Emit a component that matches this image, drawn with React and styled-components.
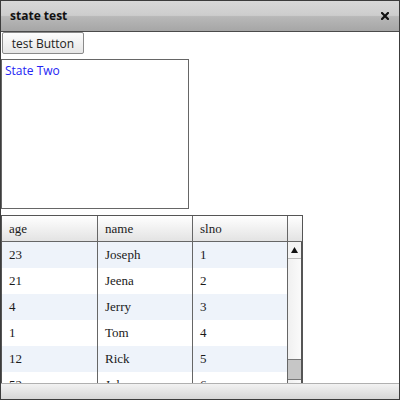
import React from "react";
import styled, { createGlobalStyle } from "styled-components";

const Global = createGlobalStyle`
  html, body { margin: 0; padding: 0; width: 400px; height: 400px; overflow: hidden; background: #fff; }
  * { box-sizing: border-box; }
`;

const Window = styled.div`
  width: 400px;
  height: 400px;
  border: 1px solid #3c3c3c;
  display: flex;
  flex-direction: column;
  background: #fff;
  font-family: "Open Sans", "Noto Sans", sans-serif;
`;

const TitleBar = styled.div`
  height: 31px;
  flex: none;
  display: flex;
  align-items: center;
  justify-content: space-between;
  padding: 0 10px 1px 9px;
  border-bottom: 1px solid #4a4a4a;
  background: linear-gradient(#d8d8d8 0%, #cdcdcd 48%, #b8b8b8 52%, #a6a6a6 100%);
  font-weight: bold;
  font-size: 12px;
  color: #111;
`;

const CloseIcon = styled.svg`
  width: 8px;
  height: 8px;
  display: block;
`;

const Content = styled.div`
  flex: 1;
  overflow: hidden;
  display: flex;
  flex-direction: column;
  align-items: flex-start;
`;

const Button = styled.button`
  flex: none;
  margin: 0 0 0 1px;
  width: 82px;
  height: 22px;
  padding: 0;
  border: 1px solid #8a8a8a;
  border-radius: 2px;
  background: linear-gradient(#fdfdfd, #e6e6e6);
  font-family: "Open Sans", "Noto Sans", sans-serif;
  font-size: 12px;
  color: #222;
`;

const Panel = styled.div`
  margin-top: 5px;
  width: 188px;
  height: 150px;
  flex: none;
  border: 1px solid #666;
  padding: 2px 3px;
  font-size: 12px;
  color: #2424f4;
`;

const Table = styled.div`
  margin-top: 6px;
  width: 302px;
  flex: none;
  border: 1px solid #555;
  border-bottom: none;
  font-family: "Liberation Serif", serif;
  font-size: 13px;
  color: #1a1a1a;
`;

const HeaderRow = styled.div`
  display: flex;
  height: 26px;
  border-bottom: 1px solid #666;
  background: linear-gradient(#ffffff, #e3e3e3);
`;

const Cell = styled.div`
  width: ${(p) => p.$w}px;
  flex: none;
  height: 100%;
  display: flex;
  align-items: center;
  padding-left: 7px;
  border-right: ${(p) => (p.$last ? "none" : "1px solid #666")};
`;

const Body = styled.div`
  display: flex;
  height: 170px;
`;

const Rows = styled.div`
  display: flex;
  flex-direction: column;
  width: 286px;
`;

const Row = styled.div`
  display: flex;
  height: 26px;
  flex: none;
  background: ${(p) => (p.$alt ? "#eef3fa" : "#ffffff")};
`;

const ScrollBar = styled.div`
  width: 14px;
  display: flex;
  flex-direction: column;
  border-right: 1px solid #555;
  background: linear-gradient(90deg, #f0f0f0, #fafafa);
`;

const ScrollButton = styled.div`
  height: 17px;
  flex: none;
  display: flex;
  align-items: center;
  justify-content: center;
  border-bottom: 1px solid #bbb;
  background: #f4f4f4;
`;

const Track = styled.div`
  flex: 1;
  padding-top: 100px;
`;

const Thumb = styled.div`
  height: 21px;
  border-top: 1px solid #777;
  border-bottom: 1px solid #777;
  background: #c6c6c6;
`;

const BottomBar = styled.div`
  height: 16px;
  flex: none;
  border-top: 1px solid #b0b0b0;
  background: linear-gradient(#f2f2f2, #d6d6d6);
`;

const cols = [96, 95, 95];
const data = [
  [23, "Joseph", 1],
  [21, "Jeena", 2],
  [4, "Jerry", 3],
  [1, "Tom", 4],
  [12, "Rick", 5],
  [52, "John", 6],
  [30, "Mary", 7],
];

export default function App() {
  return (
    <>
      <Global />
      <Window>
        <TitleBar>
          <span>state test</span>
          <CloseIcon viewBox="0 0 8 8">
            <path d="M1 1L7 7M7 1L1 7" stroke="#111" strokeWidth="2.2" strokeLinecap="square" />
          </CloseIcon>
        </TitleBar>
        <Content>
          <Button>test Button</Button>
          <Panel>State Two</Panel>
          <Table>
            <HeaderRow>
              <Cell $w={cols[0]}>age</Cell>
              <Cell $w={cols[1]}>name</Cell>
              <Cell $w={cols[2]}>slno</Cell>
              <Cell $w={14} $last />
            </HeaderRow>
            <Body>
              <Rows>
                {data.map((r, i) => (
                  <Row key={i} $alt={i % 2 === 0}>
                    <Cell $w={cols[0]}>{r[0]}</Cell>
                    <Cell $w={cols[1]}>{r[1]}</Cell>
                    <Cell $w={cols[2]}>{r[2]}</Cell>
                  </Row>
                ))}
              </Rows>
              <ScrollBar>
                <ScrollButton>
                  <svg width="7" height="6" viewBox="0 0 7 6">
                    <path d="M3.5 0L7 6H0Z" fill="#111" />
                  </svg>
                </ScrollButton>
                <Track>
                  <Thumb />
                </Track>
              </ScrollBar>
            </Body>
          </Table>
        </Content>
        <BottomBar />
      </Window>
    </>
  );
}
